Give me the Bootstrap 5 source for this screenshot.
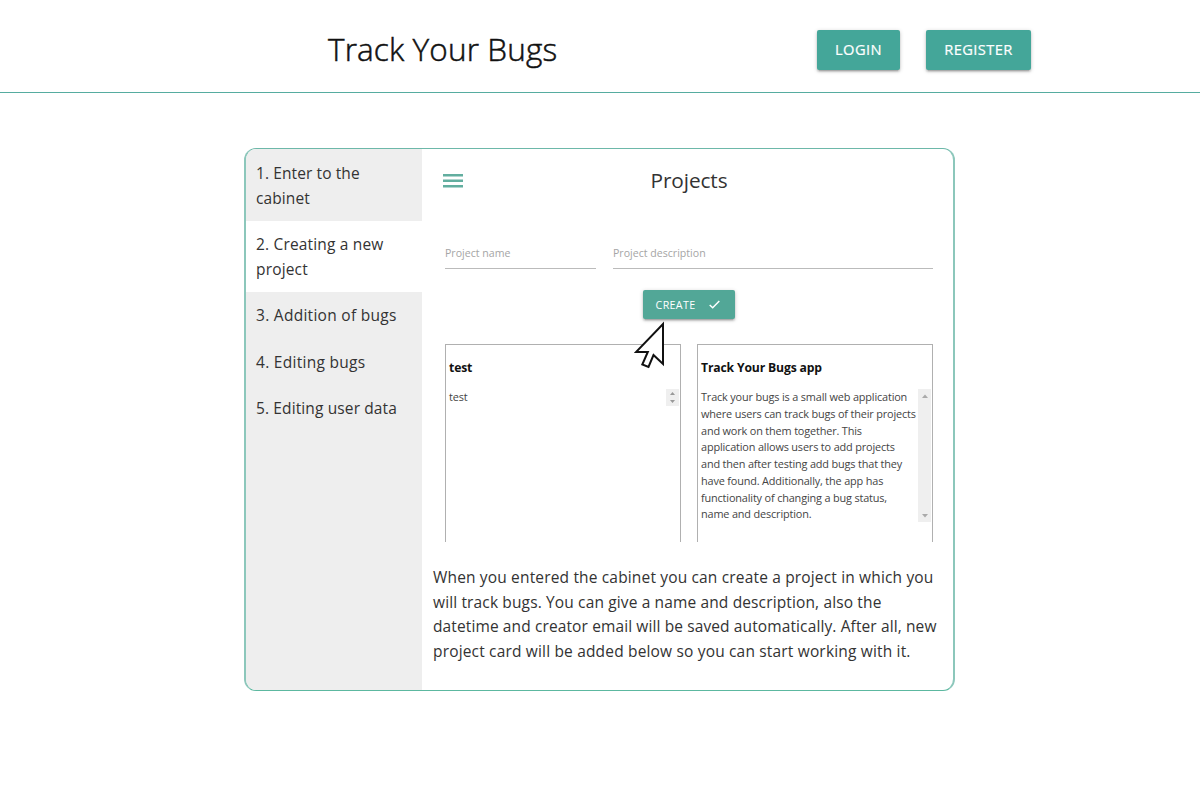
<!DOCTYPE html>
<html lang="en">
<head>
<meta charset="utf-8">
<meta name="viewport" content="width=device-width, initial-scale=1">
<title>Track Your Bugs</title>
<link href="https://cdn.jsdelivr.net/npm/bootstrap@5.3.0/dist/css/bootstrap.min.css" rel="stylesheet">
<style>
body{font-family:"Open Sans","Noto Sans",sans-serif;color:#292929;font-size:15.5px;line-height:24.4px;background:#fff}
.topbar{height:93px;border-bottom:1px solid #56aca0;padding:7px 169px 0 328px}
.topbar h1{font-size:31.5px;line-height:44px;font-weight:300;color:#111;letter-spacing:.12px;-webkit-text-stroke:.5px #111;padding-bottom:2px}
.teal{background:#44a699;color:#fff;border:0;border-radius:2px;text-transform:uppercase;box-shadow:0 2px 2px rgba(0,0,0,.14),0 3px 1px -2px rgba(0,0,0,.12),0 1px 4px rgba(0,0,0,.2);padding:0;white-space:nowrap}
.teal:hover{background:#2bbbad;color:#fff}
.topbar .teal{height:40px;font-size:14.7px;line-height:38px;letter-spacing:.4px;font-weight:500;-webkit-text-stroke:.2px #fff;padding-bottom:2px}
.b-login{width:83px}.b-reg{width:105px}
.guide{width:711px;height:543px;margin:55px 0 0 244px;border:2px solid #8cc7bb;border-top:1px solid #6db8a9;border-bottom:1px solid #5cb8a0;border-radius:12px;overflow:hidden}
.steps{width:176px;background:#eee;padding-top:1px}
.steps a{display:block;padding:11.1px 10px;color:#333;text-decoration:none;white-space:nowrap;letter-spacing:.1px}
.steps a.current{background:#fff;letter-spacing:.17px}
.steps a.current ~ a{letter-spacing:.28px}
.steps a:last-child{letter-spacing:.12px!important}
.demo{width:488px;margin-left:23px;padding-top:1px}
.demo-head{height:62px}
.demo-head h2{font-size:20.8px;line-height:26px;font-weight:400;color:#333;letter-spacing:-.1px;padding:0 18px 2px 0}
.inp{height:29px;border-bottom:1.5px solid #bbb;color:#a5a5a5;font-size:10.6px;line-height:27px}
.b-create{width:92px;height:29px;font-size:10.7px;line-height:28px;background:#52a797;letter-spacing:.33px;font-weight:500;padding-right:2px}
.proj{width:236px;height:198px;border:1px solid #b0b0b0;border-bottom:0;padding:11px 1px 0 3px;font-size:10.9px;line-height:16.75px;color:#444;letter-spacing:-.16px}
.proj h3{font-size:12.2px;line-height:23px;font-weight:700;color:#111;margin:0 0 10px}
.proj .bar{background:#efefef;flex:none}
.cursor{left:189px;top:172px}
.note{margin-left:11px;margin-top:23.3px;white-space:nowrap;color:#333}
.note span:nth-of-type(1){letter-spacing:.16px}
.note span:nth-of-type(2){letter-spacing:.135px}
.note span:nth-of-type(3){letter-spacing:.113px}
.note span:nth-of-type(4){letter-spacing:.17px}
</style>
</head>
<body>
<header class="topbar d-flex align-items-center justify-content-between">
  <h1 class="m-0">Track Your Bugs</h1>
  <div class="d-flex" style="gap:26px"><button class="btn teal b-login">Login</button><button class="btn teal b-reg">Register</button></div>
</header>
<main class="guide d-flex">
  <nav class="steps flex-shrink-0">
    <a href="#">1. Enter to the<br>cabinet</a>
    <a href="#" class="current">2. Creating a new<br>project</a>
    <a href="#">3. Addition of bugs</a>
    <a href="#">4. Editing bugs</a>
    <a href="#">5. Editing user data</a>
  </nav>
  <section class="flex-grow-1">
    <div class="demo position-relative">
      <div class="demo-head d-flex align-items-center">
        <svg width="20" height="14" viewBox="0 0 20 14" class="flex-shrink-0" style="margin-left:-2px"><path d="M0 1.300h20M0 6.700h20M0 12.300h20" stroke="#62ae9f" stroke-width="2.400"/></svg>
        <h2 class="mb-0 w-100 text-center">Projects</h2>
      </div>
      <div class="d-flex" style="gap:17px;padding-top:28px">
        <div class="inp" style="width:151px">Project name</div>
        <div class="inp flex-grow-1">Project description</div>
      </div>
      <div class="d-flex justify-content-center" style="padding-top:21px">
        <button class="btn teal b-create d-flex align-items-center justify-content-center">Create<svg width="11" height="9" viewBox="0 0 11 9" style="margin-left:14px"><path d="M.7 5 3.7 7.8 10.3 1" fill="none" stroke="#fff" stroke-width="1.5"/></svg></button>
      </div>
      <div class="d-flex justify-content-between" style="padding-top:25px">
        <article class="proj"><h3>test</h3>
          <div class="d-flex justify-content-between"><span>test</span>
          <svg class="bar" width="13" height="17" viewBox="0 0 13 17"><path d="m4 6 2.500-3L9 6zM4 11l2.500 3L9 11z" fill="#999"/></svg></div>
        </article>
        <article class="proj"><h3>Track Your Bugs app</h3>
          <div class="d-flex justify-content-between text-nowrap"><div>Track your bugs is a small web application<br>where users can track bugs of their projects<br>and work on them together. This<br>application allows users to add projects<br>and then after testing add bugs that they<br>have found. Additionally, the app has<br>functionality of changing a bug status,<br>name and description.</div>
          <svg class="bar" width="13" height="133" viewBox="0 0 13 133"><path d="m4 9 3-3.500L10 9zM4 125l3 3.500 3-3.500z" fill="#aaa"/></svg></div>
        </article>
      </div>
      <svg class="cursor position-absolute" width="32" height="48" viewBox="0 0 32 48"><path d="M29 3v40l-9.500-9-5 12-6.200-2.500 5.500-12.500H2z" fill="#fff" stroke="#111" stroke-width="2"/></svg>
    </div>
    <p class="note mb-0"><span>When you entered the cabinet you can create a project in which you</span><br><span>will track bugs. You can give a name and description, also the</span><br><span>datetime and creator email will be saved automatically. After all, new</span><br><span>project card will be added below so you can start working with it.</span></p>
  </section>
</main>
<script src="https://cdn.jsdelivr.net/npm/bootstrap@5.3.0/dist/js/bootstrap.bundle.min.js"></script>
</body>
</html>
